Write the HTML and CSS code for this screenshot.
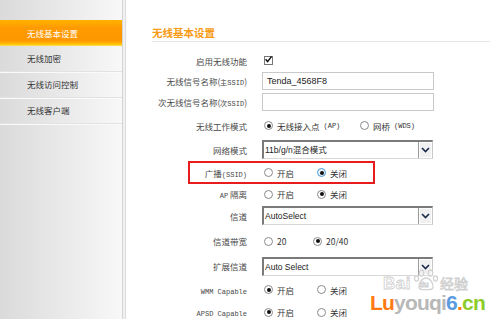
FILE: index.html
```html
<!DOCTYPE html>
<html lang="zh-CN">
<head>
<meta charset="utf-8">
<link rel="stylesheet" href="styles.css">
</head>
<body>
<div class="page">
  <aside class="side">
    <ul class="menu">
      <li class="item active">无线基本设置</li>
      <li class="item">无线加密</li>
      <li class="item">无线访问控制</li>
      <li class="item">无线客户端</li>
    </ul>
  </aside>
  <div class="edge"></div>
  <main class="main">
    <h1 class="title">无线基本设置</h1>
    <div class="form">
      <div class="row h21"><span class="lbl">启用无线功能</span>
        <span class="ctl"><span class="chk"><svg width="9" height="9" viewBox="0 0 9 9"><path d="M1.6 4.3 L3.6 6.6 L7.6 1.4" fill="none" stroke="#111" stroke-width="1.5"/></svg></span></span></div>
      <div class="row h20"><span class="lbl">无线信号名称(<span class="mono">主SSID</span>)</span>
        <span class="ctl"><span class="input">Tenda_4568F8</span></span></div>
      <div class="row h22"><span class="lbl">次无线信号名称(<span class="mono">次SSID</span>)</span>
        <span class="ctl"><span class="input"></span></span></div>
      <div class="row h25"><span class="lbl">无线工作模式</span>
        <span class="ctl"><span class="opt w96"><span class="radio on"></span>无线接入点<span class="mono">(AP)</span></span><span class="opt"><span class="radio"></span>网桥<span class="mono">(WDS)</span></span></span></div>
      <div class="row h23"><span class="lbl">网络模式</span>
        <span class="ctl"><span class="select"><span class="sel-text">11b/g/n混合模式</span><span class="sel-btn"><svg width="9" height="6" viewBox="0 0 9 6"><path d="M1 1 L4.5 4.5 L8 1" fill="none" stroke="#1a2a4a" stroke-width="1.6"/></svg></span></span></span></div>
      <div class="row h23 marked"><span class="lbl">广播<span class="mono">(SSID)</span></span>
        <span class="ctl"><span class="opt w53"><span class="radio"></span>开启</span><span class="opt"><span class="radio on focus"></span>关闭</span></span></div>
      <div class="row h20"><span class="lbl"><span class="mono">AP</span> 隔离</span>
        <span class="ctl"><span class="opt w53"><span class="radio"></span>开启</span><span class="opt"><span class="radio on"></span>关闭</span></span></div>
      <div class="row h23"><span class="lbl">信道</span>
        <span class="ctl"><span class="select"><span class="sel-text">AutoSelect</span><span class="sel-btn"><svg width="9" height="6" viewBox="0 0 9 6"><path d="M1 1 L4.5 4.5 L8 1" fill="none" stroke="#1a2a4a" stroke-width="1.6"/></svg></span></span></span></div>
      <div class="row h28"><span class="lbl">信道带宽</span>
        <span class="ctl"><span class="opt w49"><span class="radio"></span>20</span><span class="opt"><span class="radio on"></span>20/40</span></span></div>
      <div class="row h22"><span class="lbl">扩展信道</span>
        <span class="ctl"><span class="select"><span class="sel-text">Auto Select</span><span class="sel-btn"><svg width="9" height="6" viewBox="0 0 9 6"><path d="M1 1 L4.5 4.5 L8 1" fill="none" stroke="#1a2a4a" stroke-width="1.6"/></svg></span></span></span></div>
      <div class="row h25"><span class="lbl"><span class="mono">WMM Capable</span></span>
        <span class="ctl"><span class="opt w53"><span class="radio on"></span>开启</span><span class="opt"><span class="radio"></span>关闭</span></span></div>
      <div class="row h20"><span class="lbl"><span class="mono">APSD Capable</span></span>
        <span class="ctl"><span class="opt w53"><span class="radio on"></span>开启</span><span class="opt"><span class="radio"></span>关闭</span></span></div>
    </div>
  </main>
  <div class="wm">
    <div class="baidu">
      <span class="bai">Bai</span>
      <span class="pawbox"><svg class="paw" width="26" height="22" viewBox="0 0 26 22"><g fill="none" stroke="#d2d2d2" stroke-width="1.3"><ellipse cx="8.5" cy="4" rx="2.2" ry="3"/><ellipse cx="17.5" cy="4" rx="2.2" ry="3"/><ellipse cx="3.5" cy="9.5" rx="2" ry="2.6"/><ellipse cx="22.5" cy="9.5" rx="2" ry="2.6"/><path d="M13 9 C8.5 9 5.5 15 6 18.5 C6.6 21.5 10.5 20.6 13 20.6 C15.5 20.6 19.4 21.5 20 18.5 C20.5 15 17.5 9 13 9 Z"/></g></svg><span class="du">du</span></span>
      <span class="jy">经验</span>
    </div>
    <div class="site"><span class="o">Lu</span><span class="g">youqi</span><span class="b">6</span><span class="o">.</span><span class="gr">cn</span></div>
  </div>
</div>
</body>
</html>
```
FILE: styles.css
```css
html, body {
  margin: 0;
  padding: 0;
  background: #fff;
  overflow: hidden;
}
.page {
  position: relative;
  display: flex;
  width: 500px;
  height: 319px;
  font-family: "Noto Sans CJK SC", "Liberation Sans", sans-serif;
  color: #444;
}
.side {
  width: 122px;
  height: 100%;
  background: linear-gradient(to right, #dadada, #f8f8f8);
  padding-top: 20px;
  box-sizing: border-box;
}
.menu {
  list-style: none;
  margin: 0;
  padding: 0;
}
.item {
  height: 25px;
  line-height: 25px;
  padding-left: 27px;
  font-size: 8.5px;
  color: #333;
  border-bottom: 1px solid #e2e2e2;
  box-shadow: 0 1px 0 #fafafa;
}
.item.active {
  height: 26px;
  line-height: 26px;
  color: #fff;
  background: linear-gradient(#ffb300, #ff9a00 30%, #ff9800 80%, #ffc400 93%, #ffe066);
  border-bottom: none;
  box-shadow: none;
}
.edge {
  width: 5px;
  height: 100%;
  background: linear-gradient(to right, #d4d4d4 0 1px, #f0f0f0 1px 3px, #dedede 3px 4px, #fbfbfb 4px);
}
.main {
  flex: 1;
  padding-left: 25px;
  padding-right: 10px;
}
.title {
  margin: 25px 0 0;
  height: 15px;
  font-size: 10.5px;
  line-height: 15px;
  font-weight: bold;
  color: #f79a14;
  border-bottom: 1px solid #e6e6e6;
  padding-bottom: 1px;
}
.form {
  margin-top: 8px;
  display: flex;
  flex-direction: column;
}
.row {
  display: flex;
  align-items: center;
  font-size: 8.5px;
}
.h20 { height: 20px; }
.h21 { height: 21px; }
.h22 { height: 22px; }
.h23 { height: 23px; }
.h25 { height: 25px; }
.h28 { height: 28px; }
.lbl {
  width: 95px;
  text-align: right;
  padding-right: 15px;
  white-space: nowrap;
  color: #4a4a4a;
}
.mono {
  font-family: "Liberation Mono", monospace;
  font-size: 7px;
}
.ctl {
  display: flex;
  align-items: center;
  color: #333;
}
.chk {
  display: block;
  width: 9px;
  height: 9px;
  margin-left: 2px;
  border: 1px solid #777;
  box-sizing: border-box;
  background: #fff;
  position: relative;
}
.chk svg {
  position: absolute;
  left: -1px;
  top: -2px;
}
.input {
  display: block;
  width: 172px;
  height: 18px;
  box-sizing: border-box;
  border: 1px solid #c9c9c9;
  font-family: "Liberation Sans", sans-serif;
  font-size: 9px;
  line-height: 16px;
  padding-left: 4px;
  color: #222;
}
.select {
  display: flex;
  width: 171px;
  height: 19px;
  box-sizing: border-box;
  border-style: solid;
  border-width: 2px 1px 1px 2px;
  border-color: #7a7a7a #c8c8c8 #d8d8d8 #7a7a7a;
}
.sel-text {
  flex: 1;
  font-family: "Liberation Sans", "Noto Sans CJK SC", sans-serif;
  font-size: 8.5px;
  line-height: 17px;
  padding-left: 1px;
  color: #222;
}
.sel-btn {
  width: 13px;
  display: flex;
  align-items: center;
  justify-content: center;
  background: #f0f0f0;
  border-left: 1px solid #9a9a9a;
  box-shadow: inset 0 0 0 1px #fff;
}
.opt {
  display: inline-flex;
  align-items: center;
  gap: 4px;
  white-space: nowrap;
}
.w53 { width: 53px; }
.w49 { width: 49px; }
.w96 { width: 96px; }
.radio {
  display: block;
  width: 9px;
  height: 9px;
  margin-left: 2px;
  border: 1px solid #8a8a8a;
  border-radius: 50%;
  box-sizing: border-box;
  background: #fff;
  position: relative;
}
.radio.on::after {
  content: "";
  position: absolute;
  left: 1.5px;
  top: 1.5px;
  width: 4px;
  height: 4px;
  border-radius: 50%;
  background: #111;
}
.radio.focus {
  border-color: #4b9bd6;
  background: #e6f2fb;
}
.marked {
  position: relative;
}
.marked::after {
  content: "";
  position: absolute;
  left: 36px;
  top: 0;
  width: 187px;
  height: 23px;
  box-sizing: border-box;
  border: 2px solid #e81c1c;
}
.wm {
  position: absolute;
  right: 10px;
  bottom: 0;
  width: 120px;
  height: 48px;
}
.baidu {
  position: absolute;
  left: 13px;
  top: 0;
  height: 20px;
  display: flex;
  align-items: flex-end;
  font-family: "Liberation Sans", sans-serif;
  font-weight: bold;
  color: #fff;
  -webkit-text-stroke: 0.8px #cfcfcf;
}
.bai { font-size: 17px; line-height: 15px; letter-spacing: 0.5px; }
.pawbox {
  position: relative;
  width: 26px;
  height: 22px;
  margin: 0 1px 0 2px;
}
.paw { display: block; }
.du {
  position: absolute;
  left: 6px;
  bottom: 2px;
  font-size: 8px;
  line-height: 9px;
}
.jy {
  font-size: 14px;
  line-height: 16px;
  font-weight: normal;
  font-family: "Noto Sans CJK SC", sans-serif;
}
.site {
  position: absolute;
  left: 0;
  bottom: 4px;
  font-family: "Liberation Sans", sans-serif;
  font-weight: bold;
  font-size: 21px;
  line-height: 24px;
  letter-spacing: -0.8px;
  white-space: nowrap;
}
.site .o { color: #ff7a12; }
.site .g { color: #b8b8b8; }
.site .b { color: #5b9be0; }
.site .gr { color: #8ccc2a; }
```
